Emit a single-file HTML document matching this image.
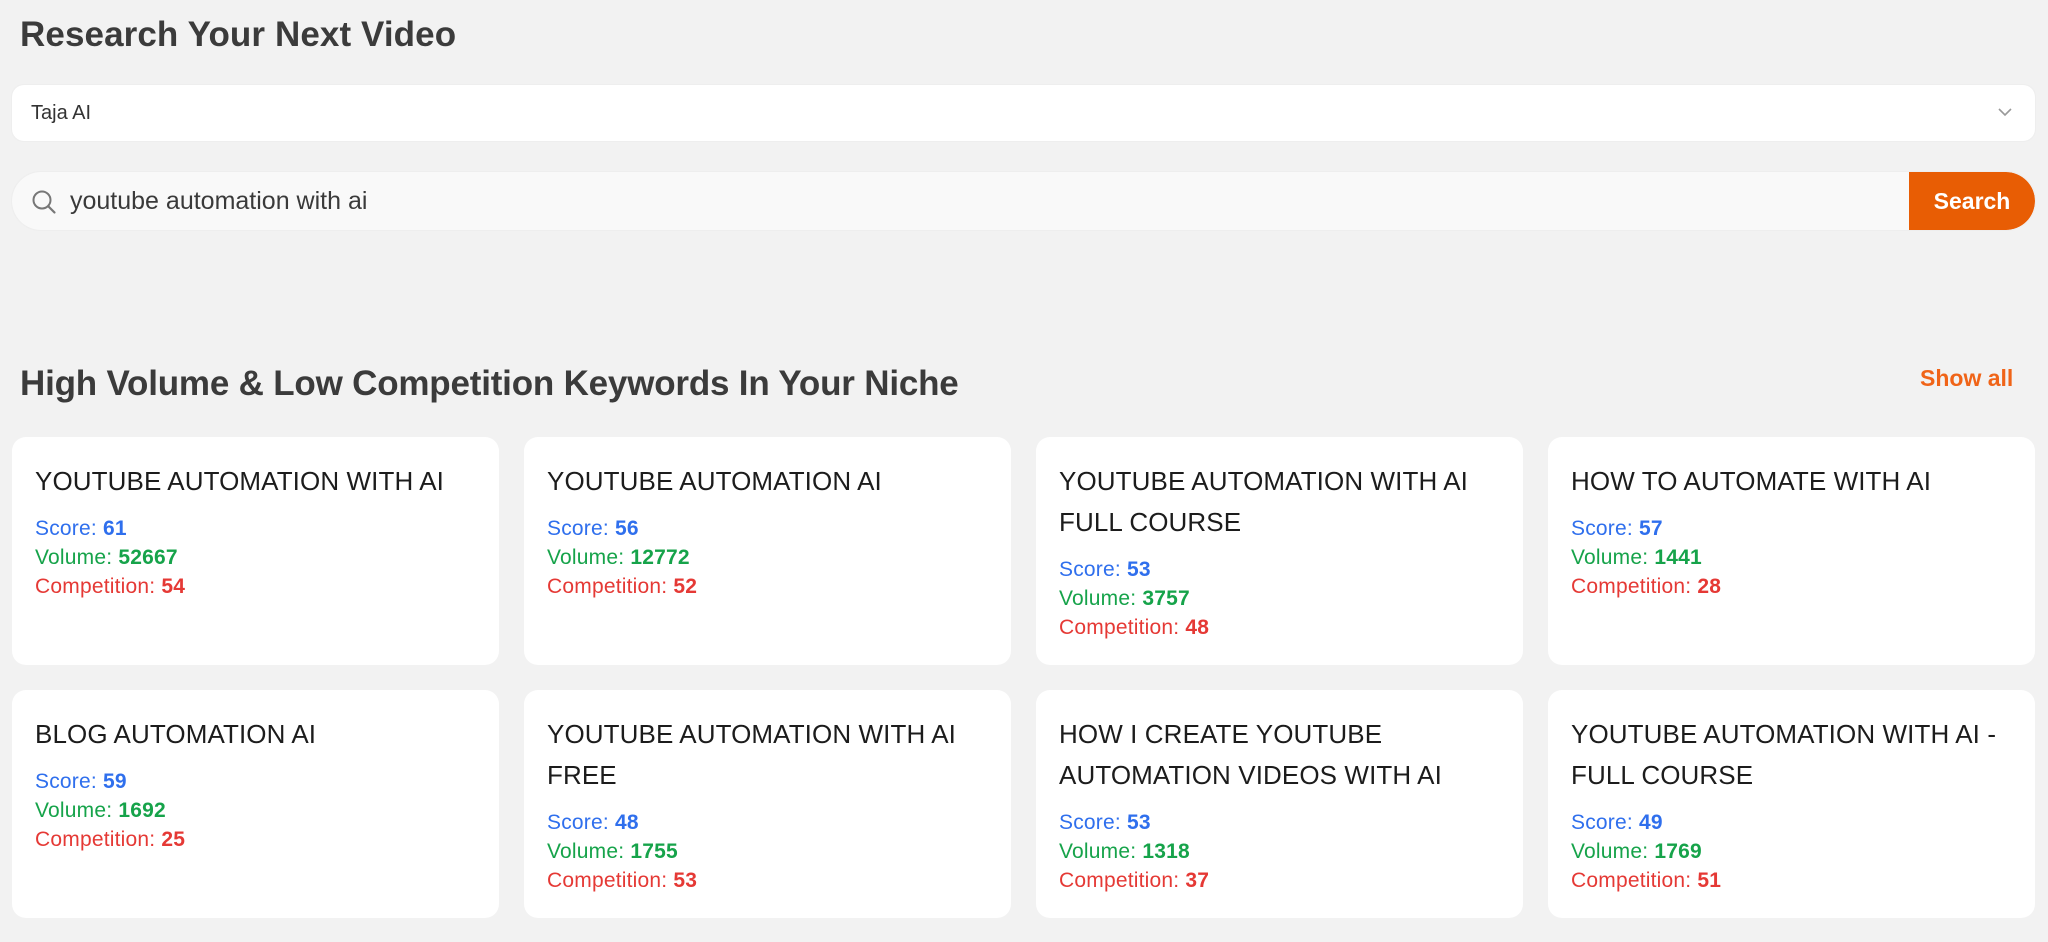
<!DOCTYPE html>
<html><head><meta charset="utf-8"><style>
*{box-sizing:border-box;margin:0;padding:0}
body{width:2048px;height:942px;background:#f2f2f2;font-family:"Liberation Sans",sans-serif;position:relative;overflow:hidden;color:#333}
h1{position:absolute;left:20px;top:14px;font-size:35px;font-weight:bold;color:#3b3b3b;line-height:42px;letter-spacing:0.1px}
.dd{position:absolute;left:12px;top:85px;width:2023px;height:56px;background:#fff;border-radius:12px;box-shadow:0 0 2px rgba(0,0,0,.06)}
.dd span{position:absolute;left:19px;top:0;line-height:56px;font-size:20px;color:#333}
.dd svg{position:absolute;right:22px;top:22px}
.sb{position:absolute;left:12px;top:172px;width:2023px;height:58px;background:#f9f9f9;border-radius:29px;overflow:hidden;box-shadow:0 0 2px rgba(0,0,0,.06)}
.sb svg{position:absolute;left:19px;top:17px}
.sb .q{position:absolute;left:58px;line-height:58px;font-size:25px;color:#3a3a3a}
.sb .btn{position:absolute;right:0;top:0;width:126px;height:58px;background:#e85d04;color:#fff;font-weight:bold;font-size:23px;line-height:58px;text-align:center;border-radius:0 29px 29px 0}
h2{position:absolute;left:20px;top:363px;font-size:35px;font-weight:bold;color:#3b3b3b;line-height:42px;letter-spacing:-0.2px}
.sa{position:absolute;left:1920px;top:363px;font-size:23px;font-weight:bold;color:#f06418;line-height:30px}
.grid{position:absolute;left:12px;top:437px;display:grid;grid-template-columns:repeat(4,487px);grid-template-rows:228px 228px;column-gap:25px;row-gap:25px}
.c{background:#fff;border-radius:14px;padding:24px 23px}
.t{font-size:26px;line-height:41px;color:#1c1c1c;text-transform:uppercase;margin-bottom:12px;letter-spacing:0.1px}
.l{font-size:21px;line-height:29px;letter-spacing:0.2px}
.l b{font-weight:bold}
.s{color:#2f6fed}.v{color:#16a34a}.r{color:#e53935}
</style></head><body>
<h1>Research Your Next Video</h1>
<div class="dd"><span>Taja AI</span><svg width="16" height="10" viewBox="0 0 16 10"><path d="M2 2l6 6 6-6" fill="none" stroke="#999" stroke-width="1.6"/></svg></div>
<div class="sb"><svg width="26" height="26" viewBox="0 0 26 26"><circle cx="11" cy="11" r="8.5" fill="none" stroke="#777" stroke-width="2"/><path d="M17.5 17.5l6 6" stroke="#777" stroke-width="2.2" stroke-linecap="round"/></svg><span class="q">youtube automation with ai</span><div class="btn">Search</div></div>
<h2>High Volume &amp; Low Competition Keywords In Your Niche</h2>
<div class="sa">Show all</div>
<div class="grid">
<div class="c"><div class="t">YOUTUBE AUTOMATION WITH AI</div><div class="l s">Score: <b>61</b></div><div class="l v">Volume: <b>52667</b></div><div class="l r">Competition: <b>54</b></div></div>
<div class="c"><div class="t">YOUTUBE AUTOMATION AI</div><div class="l s">Score: <b>56</b></div><div class="l v">Volume: <b>12772</b></div><div class="l r">Competition: <b>52</b></div></div>
<div class="c"><div class="t">YOUTUBE AUTOMATION WITH AI<br>FULL COURSE</div><div class="l s">Score: <b>53</b></div><div class="l v">Volume: <b>3757</b></div><div class="l r">Competition: <b>48</b></div></div>
<div class="c"><div class="t">HOW TO AUTOMATE WITH AI</div><div class="l s">Score: <b>57</b></div><div class="l v">Volume: <b>1441</b></div><div class="l r">Competition: <b>28</b></div></div>
<div class="c"><div class="t">BLOG AUTOMATION AI</div><div class="l s">Score: <b>59</b></div><div class="l v">Volume: <b>1692</b></div><div class="l r">Competition: <b>25</b></div></div>
<div class="c"><div class="t">YOUTUBE AUTOMATION WITH AI<br>FREE</div><div class="l s">Score: <b>48</b></div><div class="l v">Volume: <b>1755</b></div><div class="l r">Competition: <b>53</b></div></div>
<div class="c"><div class="t">HOW I CREATE YOUTUBE<br>AUTOMATION VIDEOS WITH AI</div><div class="l s">Score: <b>53</b></div><div class="l v">Volume: <b>1318</b></div><div class="l r">Competition: <b>37</b></div></div>
<div class="c"><div class="t">YOUTUBE AUTOMATION WITH AI -<br>FULL COURSE</div><div class="l s">Score: <b>49</b></div><div class="l v">Volume: <b>1769</b></div><div class="l r">Competition: <b>51</b></div></div>
</div>
</body></html>
